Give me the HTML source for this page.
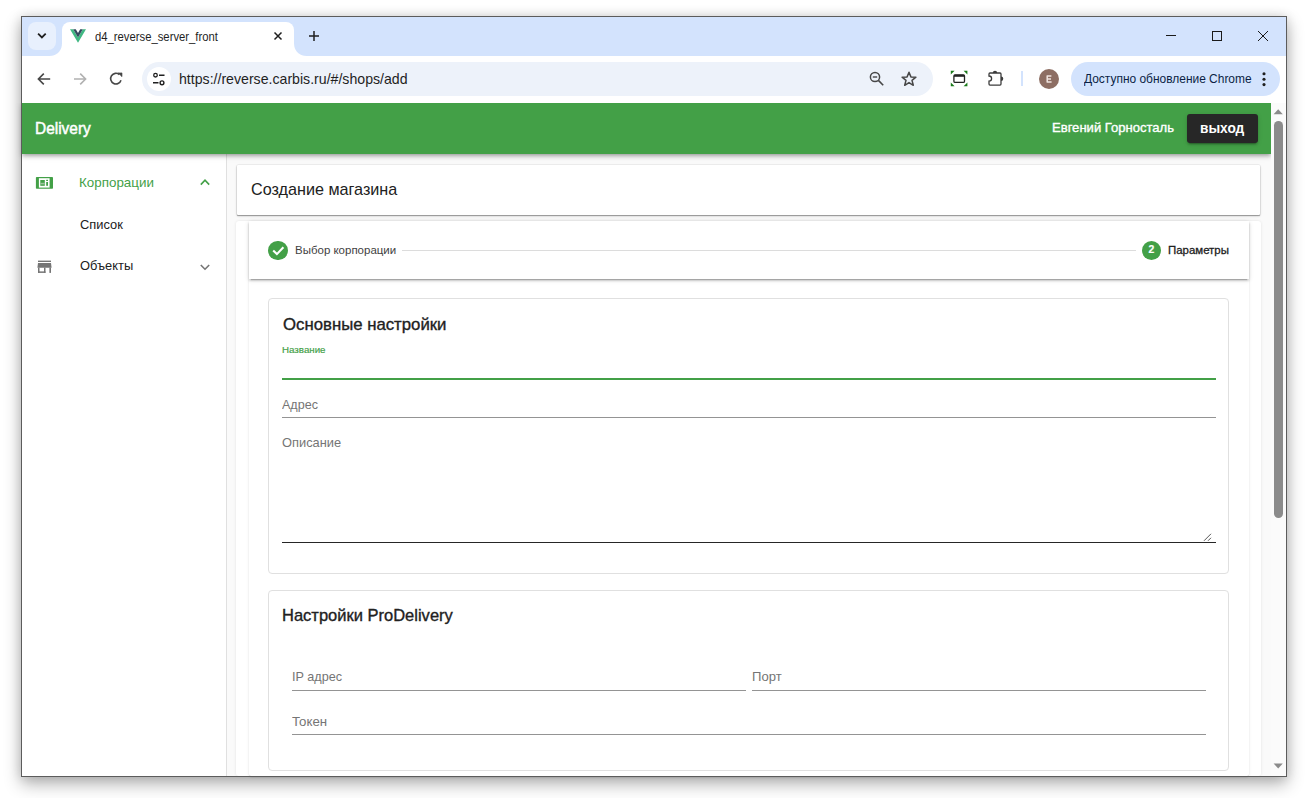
<!DOCTYPE html>
<html><head><meta charset="utf-8">
<style>
html,body{margin:0;padding:0;}
body{width:1305px;height:798px;overflow:hidden;background:#ffffff;position:relative;font-family:"Liberation Sans",sans-serif;}
.a{position:absolute;box-sizing:border-box;}
.t{position:absolute;white-space:nowrap;line-height:1;transform-origin:0 0;font-family:"Liberation Sans",sans-serif;}
#win{left:21px;top:16px;width:1266px;height:761px;background:#fff;box-shadow:0 7px 16px rgba(0,0,0,.30),0 0 10px rgba(0,0,0,.12);}
#strip{left:22px;top:17px;width:1264px;height:39px;background:#d3e3fd;}
#tabdd{left:28px;top:22px;width:28px;height:28px;border-radius:8px;background:#e8f0fd;}
#tab{left:62px;top:22px;width:232px;height:34px;background:#fff;border-radius:8px 8px 0 0;}
#tabfl{left:50px;top:44px;width:12px;height:12px;background:radial-gradient(circle at 0 0,#d3e3fd 11.4px,#fff 12.4px);}
#tabfr{left:294px;top:44px;width:12px;height:12px;background:radial-gradient(circle at 100% 0,#d3e3fd 11.4px,#fff 12.4px);}
#toolbar{left:22px;top:56px;width:1264px;height:47px;background:#fff;border-radius:7px 7px 0 0;}
#omni{left:142px;top:62px;width:791px;height:34px;border-radius:17px;background:#edf2fa;}
#info{left:147px;top:67px;width:24px;height:24px;border-radius:12px;background:#fff;}
#upd{left:1071px;top:62px;width:209px;height:34px;border-radius:17px;background:#d3e3fd;}
#avatar{left:1039px;top:69px;width:20px;height:20px;border-radius:10px;background:#8d6e63;}
#sep{left:1021px;top:71px;width:2px;height:15px;background:#d3e3fd;}
#appbar{left:22px;top:103px;width:1249px;height:51px;background:#43a047;box-shadow:0 1.6px 3.2px -0.8px rgba(0,0,0,.2),0 3.2px 4px 0 rgba(0,0,0,.14),0 0.8px 8px 0 rgba(0,0,0,.12);z-index:3;clip-path:inset(0 -30px -30px -30px);}
#exitbtn{left:1187px;top:114px;width:71px;height:29px;border-radius:3px;background:#272727;box-shadow:0 3px 1px -2px rgba(0,0,0,.2),0 2px 2px 0 rgba(0,0,0,.14),0 1px 5px 0 rgba(0,0,0,.12);}
#content{left:22px;top:154px;width:1249px;height:622px;background:#fafafa;overflow:hidden;}
#side{left:22px;top:154px;width:205px;height:622px;background:#fff;border-right:1px solid #e0e0e0;}
#scroll{left:1271px;top:103px;width:15px;height:673px;background:#fbfbfb;}
#thumb{left:1274px;top:121px;width:9px;height:397px;border-radius:4.5px;background:#8b8b8b;}
#card0{left:237px;top:165px;width:1023px;height:50px;background:#fff;border-radius:1px;box-shadow:0 0 0 0.6px rgba(0,0,0,.08),0 1.6px 0.8px -0.8px rgba(0,0,0,.2),0 1px 1.5px 0 rgba(0,0,0,.16),0 1px 3px 0 rgba(0,0,0,.12);}
#outer{left:236px;top:221px;width:1025px;height:555px;background:#fff;border-radius:3px;box-shadow:0 0 3px rgba(0,0,0,.10);}
#stepper{left:249px;top:221px;width:1000px;height:555px;background:#fff;border-radius:2px;box-shadow:0 2px 1px -1px rgba(0,0,0,.12),0 1px 1px 0 rgba(0,0,0,.08),0 1px 3px 0 rgba(0,0,0,.10);}
#shead{left:249px;top:221px;width:1000px;height:58px;background:#fff;box-shadow:0 3px 1px -2px rgba(0,0,0,.2),0 2px 2px 0 rgba(0,0,0,.14),0 1px 5px 0 rgba(0,0,0,.12);}
#sline{left:402px;top:250px;width:734px;height:1px;background:#dcdcdc;}
#c1{left:268px;top:298px;width:961px;height:276px;border:1px solid #e0e0e0;border-radius:4px;background:#fff;}
#c2{left:268px;top:590px;width:961px;height:181px;border:1px solid #e0e0e0;border-radius:4px;background:#fff;}
#gline{left:282px;top:378px;width:934px;height:2px;background:#43a047;}
#l2{left:282px;top:417px;width:934px;height:1px;background:#949494;}
#l3{left:282px;top:542px;width:934px;height:1px;background:#262626;}
#l4{left:292px;top:690px;width:454px;height:1px;background:#949494;}
#l5{left:752px;top:690px;width:454px;height:1px;background:#949494;}
#l6{left:292px;top:734px;width:914px;height:1px;background:#949494;}
#circ1{left:268.4px;top:240.7px;width:19.2px;height:19.2px;border-radius:50%;background:#43a047;}
#circ2{left:1141.9px;top:240.6px;width:19.2px;height:19.2px;border-radius:50%;background:#43a047;}
#icons{left:0;top:0;width:1305px;height:798px;z-index:10;}
.ov{z-index:5;}
#winb{left:21px;top:16px;width:1266px;height:761px;border:1px solid #5c5c5c;z-index:30;}
</style></head><body>
<div class="a" id="win"></div>
<div class="a" id="strip"></div>
<div class="a" id="tab"></div>
<div class="a" id="tabfl"></div>
<div class="a" id="tabfr"></div>
<div class="a" id="tabdd"></div>
<div class="a" id="toolbar"></div>
<div class="a" id="omni"></div>
<div class="a" id="info"></div>
<div class="a" id="upd"></div>
<div class="a" id="avatar"></div>
<div class="a" id="sep"></div>
<div class="a" id="content"></div>
<div class="a" id="side"></div>
<div class="a" id="card0"></div>
<div class="a" id="outer"></div>
<div class="a" id="stepper"></div>
<div class="a" id="c1"></div>
<div class="a" id="c2"></div>
<div class="a" id="gline"></div>
<div class="a" id="l2"></div>
<div class="a" id="l3"></div>
<div class="a" id="l4"></div>
<div class="a" id="l5"></div>
<div class="a" id="l6"></div>
<div class="a" id="shead"></div>
<div class="a" id="sline" style="z-index:4"></div>
<div class="a" id="circ1" style="z-index:4"></div>
<div class="a" id="circ2" style="z-index:4"></div>
<div class="a" id="appbar"></div>
<div class="a" id="exitbtn" style="z-index:4"></div>
<div class="a" id="scroll" style="z-index:4"></div>
<div class="a" id="thumb" style="z-index:4"></div>
<div style="position:absolute;left:0;top:0;z-index:6;">
<div class="t" id="tx_tabtitle" style="left:94.50px;top:30.87px;font-size:12.2px;color:#1f1f1f;font-weight:400;transform:scaleX(0.9258)">d4_reverse_server_front</div>
<div class="t" id="tx_url" style="left:179.03px;top:71.84px;font-size:14.6px;color:#1f1f1f;font-weight:400;transform:scaleX(0.9684)">https://reverse.carbis.ru/#/shops/add</div>
<div class="t" id="tx_upd" style="left:1083.50px;top:72.66px;font-size:12.8px;color:#0b1f45;font-weight:400;transform:scaleX(0.9337)">Доступно обновление Chrome</div>
<div class="t" id="tx_deliv" style="left:35.17px;top:120.84px;font-size:16.6px;color:#ffffff;font-weight:400;transform:scaleX(0.9306);-webkit-text-stroke:0.50px #ffffff">Delivery</div>
<div class="t" id="tx_user" style="left:1052.25px;top:121.70px;font-size:12.4px;color:#ffffff;font-weight:400;transform:scaleX(1.0537);-webkit-text-stroke:0.35px #ffffff">Евгений Горносталь</div>
<div class="t" id="tx_exit" style="left:1199.90px;top:120.33px;font-size:15.2px;color:#ffffff;font-weight:700;transform:scaleX(0.9019)">выход</div>
<div class="t" id="tx_corp" style="left:78.99px;top:176.02px;font-size:13.2px;color:#43a047;font-weight:400;transform:scaleX(1.0150)">Корпорации</div>
<div class="t" id="tx_list" style="left:80.00px;top:217.82px;font-size:13.2px;color:#212121;font-weight:400;transform:scaleX(0.9749)">Список</div>
<div class="t" id="tx_obj" style="left:80.00px;top:259.22px;font-size:13.2px;color:#212121;font-weight:400;transform:scaleX(0.9776)">Объекты</div>
<div class="t" id="tx_create" style="left:251.00px;top:182.24px;font-size:16.6px;color:#212121;font-weight:400;transform:scaleX(0.9744)">Создание магазина</div>
<div class="t" id="tx_step1" style="left:294.60px;top:244.18px;font-size:11.6px;color:#424242;font-weight:400;transform:scaleX(0.9906)">Выбор корпорации</div>
<div class="t" id="tx_step2" style="left:1168.20px;top:244.18px;font-size:11.6px;color:#212121;font-weight:400;transform:scaleX(0.9859);-webkit-text-stroke:0.30px #212121">Параметры</div>
<div class="t" id="tx_h1" style="left:282.60px;top:317.14px;font-size:16.6px;color:#212121;font-weight:400;transform:scaleX(1.0098);-webkit-text-stroke:0.35px #212121">Основные настройки</div>
<div class="t" id="tx_lbl1" style="left:282.30px;top:344.67px;font-size:9.6px;color:#43a047;font-weight:400;transform:scaleX(1.0156);-webkit-text-stroke:0.18px #43a047">Название</div>
<div class="t" id="tx_lbl2" style="left:282.40px;top:397.82px;font-size:13.2px;color:#757575;font-weight:400;transform:scaleX(0.9513)">Адрес</div>
<div class="t" id="tx_lbl3" style="left:282.40px;top:435.82px;font-size:13.2px;color:#757575;font-weight:400;transform:scaleX(0.9744)">Описание</div>
<div class="t" id="tx_h2" style="left:282.01px;top:607.74px;font-size:16.6px;color:#212121;font-weight:400;transform:scaleX(0.9946);-webkit-text-stroke:0.35px #212121">Настройки ProDelivery</div>
<div class="t" id="tx_lbl4" style="left:292.04px;top:669.82px;font-size:13.2px;color:#757575;font-weight:400;transform:scaleX(0.9591)">IP адрес</div>
<div class="t" id="tx_lbl5" style="left:751.61px;top:669.82px;font-size:13.2px;color:#757575;font-weight:400;transform:scaleX(0.9911)">Порт</div>
<div class="t" id="tx_lbl6" style="left:292.20px;top:714.82px;font-size:13.2px;color:#757575;font-weight:400;transform:scaleX(1.0055)">Токен</div>
</div>
<svg class="a" id="icons" viewBox="0 0 1305 798">
<!-- tab dropdown chevron -->
<path d="M38.1 33.7 L41.9 37.5 L45.7 33.7" fill="none" stroke="#1f1f1f" stroke-width="1.8"/>
<!-- vue logo -->
<path d="M70 29.2 L73.2 29.2 L78 37.4 L82.8 29.2 L86 29.2 L78 42.8 Z" fill="#41b883"/>
<path d="M73.2 29.2 L75.8 29.2 L78 33 L80.2 29.2 L82.8 29.2 L78 37.4 Z" fill="#34495e"/>
<!-- tab close -->
<path d="M274.5 32.5 L281.5 39.5 M281.5 32.5 L274.5 39.5" fill="none" stroke="#1f1f1f" stroke-width="1.5"/>
<!-- plus -->
<path d="M314 31 V41 M309 36 H319" fill="none" stroke="#1f1f1f" stroke-width="1.5"/>
<!-- window controls -->
<path d="M1166 35.5 H1176" stroke="#1a1a1a" stroke-width="1"/>
<rect x="1212.5" y="31.5" width="9" height="9" fill="none" stroke="#1a1a1a" stroke-width="1"/>
<path d="M1258 31 L1268 41 M1268 31 L1258 41" stroke="#1a1a1a" stroke-width="1"/>
<!-- back -->
<path d="M50.2 79 H38.5 M43.8 73.6 L38.4 79 L43.8 84.4" fill="none" stroke="#474747" stroke-width="1.6"/>
<!-- forward -->
<path d="M74 79 H85.6 M80.2 73.6 L85.6 79 L80.2 84.4" fill="none" stroke="#b1b1b1" stroke-width="1.6"/>
<!-- reload -->
<path d="M121 80.2 A5.3 5.3 0 1 1 119.4 74.6" fill="none" stroke="#474747" stroke-width="1.6"/>
<path d="M118.2 72.9 H122 V76.7 Z" fill="#474747" stroke="#474747" stroke-width="0.6"/>
<!-- tune -->
<circle cx="155.5" cy="75.2" r="1.8" fill="none" stroke="#1f1f1f" stroke-width="1.3"/>
<path d="M159 75.2 H164.5 M153 82.8 H158.5" stroke="#1f1f1f" stroke-width="1.4"/>
<circle cx="162" cy="82.8" r="1.9" fill="none" stroke="#1f1f1f" stroke-width="1.4"/>
<!-- zoom out -->
<circle cx="875" cy="77" r="4.6" fill="none" stroke="#474747" stroke-width="1.5"/>
<path d="M872.8 77 H877.2" stroke="#474747" stroke-width="1.4"/>
<path d="M878.4 80.4 L883.2 85.2" stroke="#474747" stroke-width="1.6"/>
<!-- star -->
<path d="M909 72.2 L910.9 76.9 L915.9 77.2 L912.0 80.4 L913.3 85.3 L909 82.6 L904.7 85.3 L906.0 80.4 L902.1 77.2 L907.1 76.9 Z" fill="none" stroke="#474747" stroke-width="1.5" stroke-linejoin="round"/>
<!-- screen capture -->
<rect x="953.9" y="74.8" width="10.6" height="7.6" rx="1.2" fill="none" stroke="#222" stroke-width="1.3"/>
<path d="M954 75.8 H964.4" stroke="#222" stroke-width="2"/>
<path d="M950.8 70.8 H954.6 L950.8 74.6 Z M967.4 70.8 H963.6 L967.4 74.6 Z M950.8 86.2 H954.6 L950.8 82.4 Z M967.4 86.2 H963.6 L967.4 82.4 Z" fill="#1a7a1a"/>
<!-- puzzle -->
<path d="M990 73 H1000 A1 1 0 0 1 1001 74 V84.1 A1 1 0 0 1 1000 85.1 H990 A1 1 0 0 1 989 84.1 V81.2 A2.6 2.6 0 0 0 989 76 V74 A1 1 0 0 1 990 73 Z" fill="none" stroke="#3c3c3c" stroke-width="1.3"/>
<path d="M992.8 73 A2.2 2.2 0 0 1 997.2 73 Z M1001 76.4 A2.3 2.3 0 0 1 1001 81 Z" fill="#3c3c3c"/>
<!-- avatar E -->
<path d="M1046.6 75.9 H1051.4 M1046.6 78.9 H1051 M1046.6 81.9 H1051.6 M1047.2 75.9 V81.9" fill="none" stroke="#efe3df" stroke-width="1.5"/>
<!-- update dots -->
<circle cx="1264" cy="73.8" r="1.55" fill="#1f1f1f"/>
<circle cx="1264" cy="79.2" r="1.55" fill="#1f1f1f"/>
<circle cx="1264" cy="84.6" r="1.55" fill="#1f1f1f"/>
<!-- scroll arrows -->
<path d="M1273.6 114.2 L1278.2 109.2 L1282.8 114.2 Z" fill="#8b8b8b"/>
<path d="M1273.6 763.4 L1278.2 768.4 L1282.8 763.4 Z" fill="#8b8b8b"/>
<!-- corp icon -->
<rect x="35.9" y="177" width="17.1" height="11.8" rx="0.8" fill="#43a047"/>
<rect x="38.9" y="178.2" width="10.7" height="9.4" fill="#fff"/>
<rect x="40.3" y="180" width="4.5" height="5.8" fill="#43a047"/>
<rect x="40.3" y="182.8" width="4.5" height="1.6" fill="#9cc39e"/>
<rect x="46.2" y="179.8" width="1.8" height="1.2" fill="#43a047"/>
<rect x="46.2" y="182" width="1.8" height="3.8" fill="#43a047"/>
<!-- chevron up -->
<path d="M200.8 184.6 L205 180.2 L209.2 184.6" fill="none" stroke="#43a047" stroke-width="1.6"/>
<!-- store icon -->
<rect x="38" y="260.6" width="13" height="1.4" fill="#757575"/>
<path d="M38 263 H51 L51.6 267.8 H37.4 Z" fill="#757575"/>
<rect x="38" y="267.6" width="1.5" height="5.3" fill="#757575"/>
<rect x="44" y="267.6" width="1.5" height="5.3" fill="#757575"/>
<rect x="38" y="271.4" width="7.5" height="1.5" fill="#757575"/>
<rect x="49.4" y="267.6" width="1.6" height="5.3" fill="#757575"/>
<!-- chevron down -->
<path d="M200.8 265 L205 269.2 L209.2 265" fill="none" stroke="#757575" stroke-width="1.6"/>
<!-- check -->
<path d="M273.2 250.4 L276.9 254.1 L283.4 247.2" fill="none" stroke="#fff" stroke-width="2.1"/>
<!-- resize handle -->
<path d="M1204 540.8 L1211 533.8 M1208 540.8 L1211 537.8" stroke="#444" stroke-width="0.9"/>
</svg>
<div class="a" id="winb"></div>
<div class="t" style="left:1148.6px;top:245.3px;font-size:10.4px;font-weight:700;color:#fff;z-index:11;position:absolute;-webkit-text-stroke:0.2px #fff">2</div>
</body></html>
